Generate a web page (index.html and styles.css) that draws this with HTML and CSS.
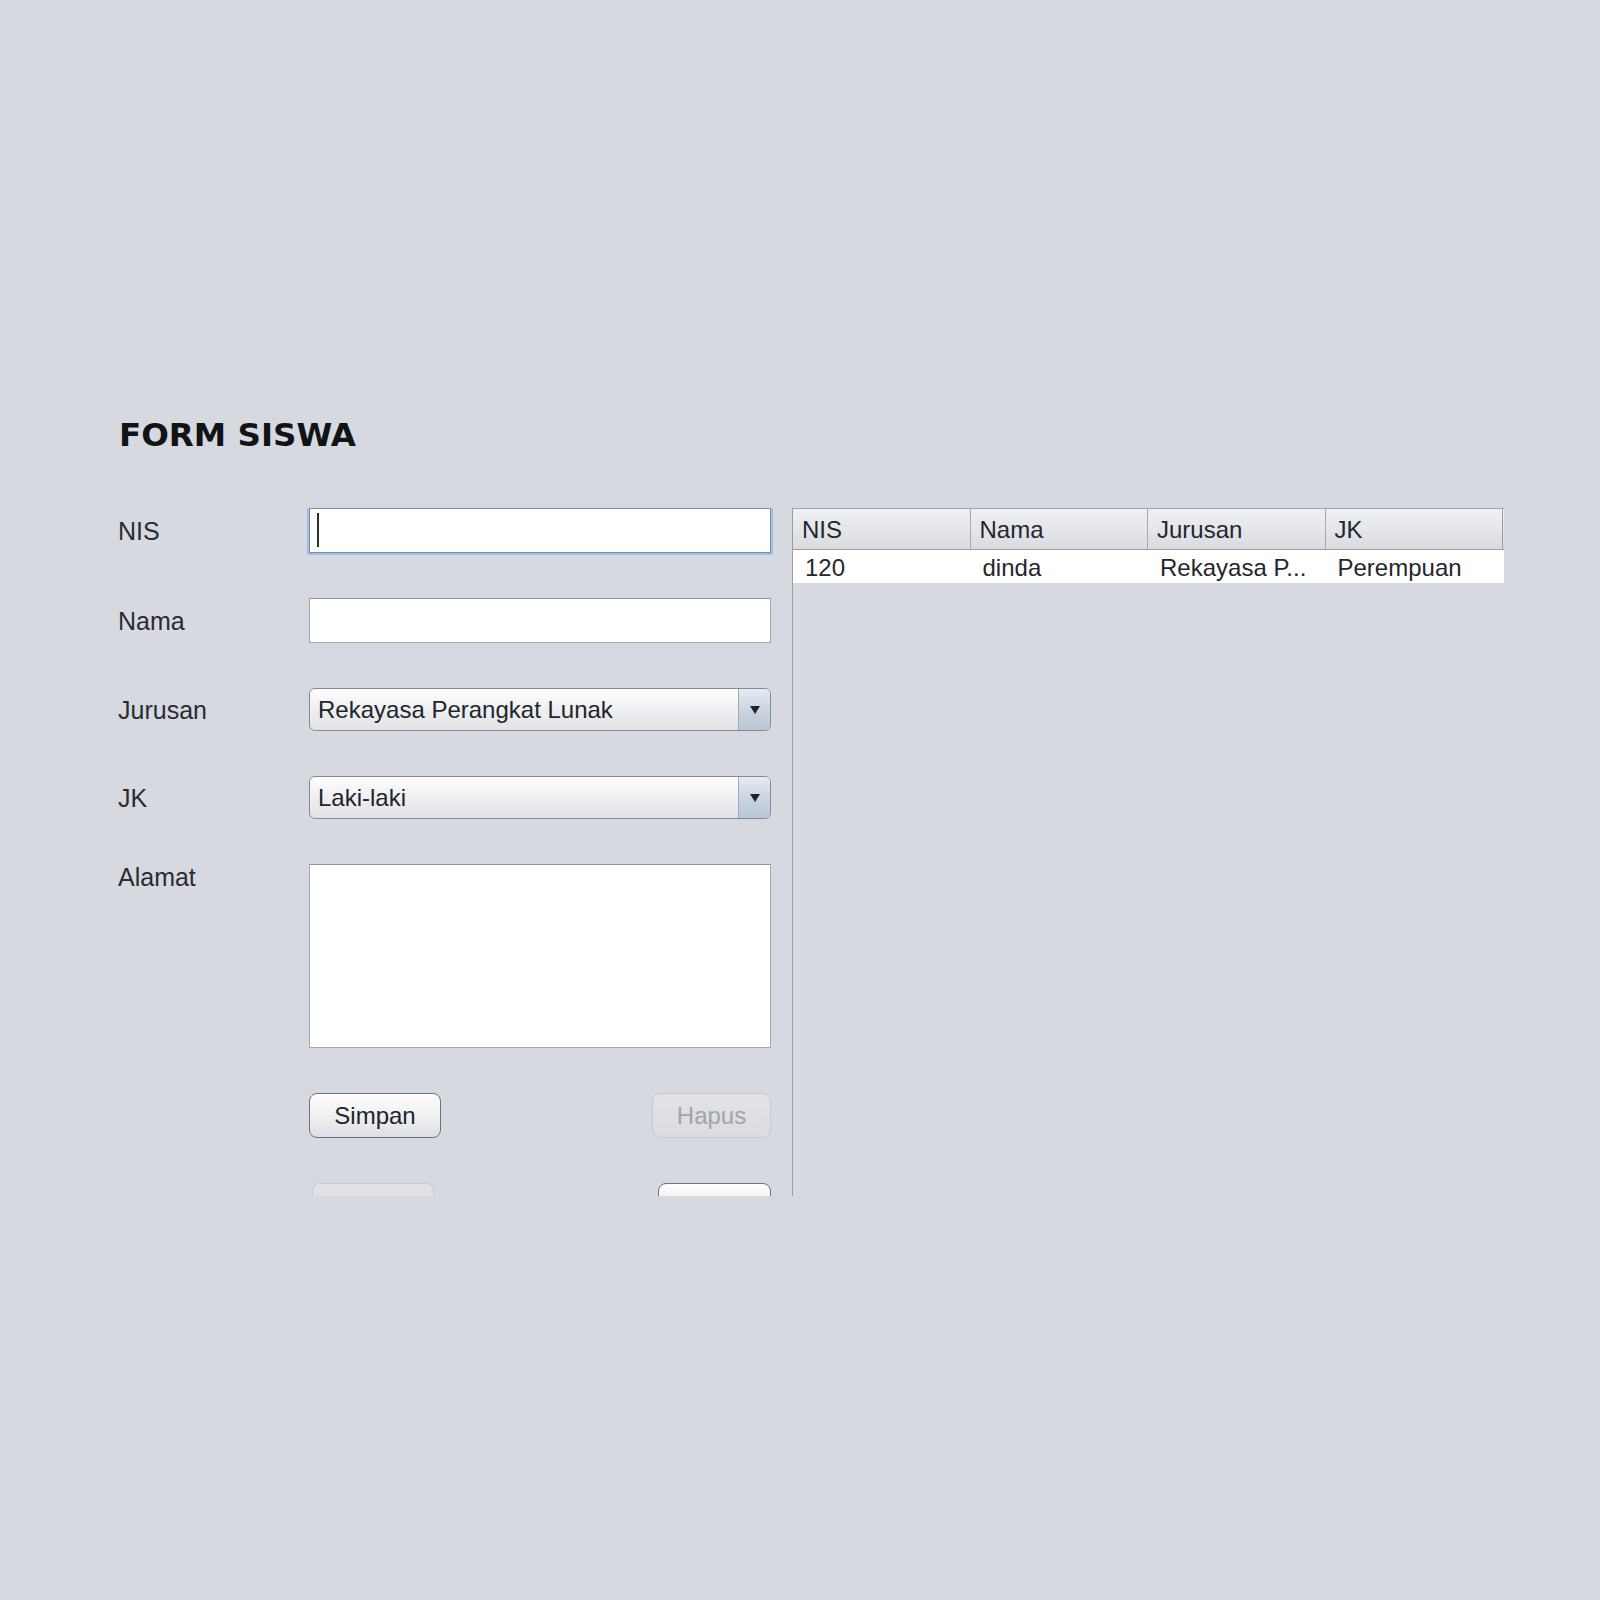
FILE: index.html
```html
<!DOCTYPE html>
<html lang="id">
<head>
  <meta charset="UTF-8">
  <title>Form Siswa</title>
  <link rel="stylesheet" href="styles.css">
</head>
<body>
  <div class="frame">
    <h1 class="title">FORM SISWA</h1>

    <div class="main">
      <!-- form input -->
      <div class="form">
        <div class="label">NIS</div>
        <div class="field focused"><span class="caret"></span></div>

        <div class="label">Nama</div>
        <div class="field"></div>

        <div class="label">Jurusan</div>
        <div class="combo">
          <span class="combo-text">Rekayasa Perangkat Lunak</span>
          <span class="combo-arrow">
            <svg width="12" height="10" viewBox="0 0 12 10"><polygon points="1,1 11,1 6,9" fill="#1e2126"/></svg>
          </span>
        </div>

        <div class="label">JK</div>
        <div class="combo">
          <span class="combo-text">Laki-laki</span>
          <span class="combo-arrow">
            <svg width="12" height="10" viewBox="0 0 12 10"><polygon points="1,1 11,1 6,9" fill="#1e2126"/></svg>
          </span>
        </div>

        <div class="label label-top">Alamat</div>
        <div class="field area"></div>

        <div></div>
        <div class="btn-row">
          <div class="btn">Simpan</div>
          <div class="btn btn-disabled btn-hapus">Hapus</div>
        </div>

        <!-- tombol baris bawah, terpotong oleh tepi panel -->
        <div></div>
        <div class="btn-row">
          <div class="btn btn-disabled btn-small"></div>
          <div class="btn btn-small2"></div>
        </div>
      </div>

      <!-- tabel data -->
      <div class="table-pane">
        <div class="thead">
          <div class="th">NIS</div>
          <div class="th">Nama</div>
          <div class="th">Jurusan</div>
          <div class="th">JK</div>
        </div>
        <div class="tr">
          <div class="td">120</div>
          <div class="td">dinda</div>
          <div class="td">Rekayasa P...</div>
          <div class="td">Perempuan</div>
        </div>
      </div>
    </div>
  </div>
</body>
</html>
```

FILE: styles.css
```css
/* global */
* {
  margin: 0;
  padding: 0;
  box-sizing: border-box;
}

body {
  background-color: #d6d9e0;
  font-family: "Liberation Sans", Arial, sans-serif;
  color: #25272c;
}

.frame {
  padding: 415px 0 0 118px;
}

.title {
  font-family: "DejaVu Sans", Verdana, sans-serif;
  font-weight: bold;
  font-size: 32.5px;
  line-height: 40px;
  color: #111316;
  margin-left: 1px;
}

/* main area, cut off at the bottom */
.main {
  display: flex;
  gap: 21px;
  margin-top: 53px;
  height: 688px;
  overflow: hidden;
}

.form {
  display: grid;
  grid-template-columns: 191px 462px;
  grid-auto-rows: min-content;
  row-gap: 45px;
  align-items: center;
}

.label {
  font-size: 25px;
  line-height: 30px;
  color: #2a2c31;
}

.label-top {
  align-self: start;
  margin-top: -2px;
}

.field {
  height: 45px;
  background-color: #fff;
  border: 1px solid #a5a8ae;
  border-top-color: #8f9299;
  position: relative;
}

.field.focused {
  border-color: #6f8fb4;
  box-shadow: 0 0 0 2px #a8bfd9;
}

.caret {
  position: absolute;
  left: 7px;
  top: 4px;
  width: 2px;
  height: 34px;
  background-color: #2b2d31;
}

.field.area {
  height: 184px;
}

/* combo box */
.combo {
  height: 43px;
  display: flex;
  align-items: center;
  border: 1px solid #878a92;
  border-radius: 6px;
  background: linear-gradient(#fefefe, #eceef1 55%, #e1e3e8);
  overflow: hidden;
}

.combo-text {
  flex: 1;
  font-size: 24px;
  padding-left: 8px;
  color: #23252a;
}

.combo-arrow {
  width: 32px;
  height: 100%;
  display: flex;
  align-items: center;
  justify-content: center;
  border-left: 1px solid #a3a9b3;
  background: linear-gradient(#e6ebf2, #c7d1de 60%, #bcc7d6);
}

/* tombol */
.btn-row {
  display: flex;
  justify-content: space-between;
}

.btn {
  width: 132px;
  height: 45px;
  display: flex;
  align-items: center;
  justify-content: center;
  font-size: 24px;
  color: #22242a;
  border: 1px solid #6f7279;
  border-radius: 8px;
  background: linear-gradient(#fdfdfd, #eceef1 60%, #dcdee3);
}

.btn-disabled {
  color: #a1a4aa;
  border-color: #c6c9cf;
  background: linear-gradient(#e1e3e8, #dadce1);
}

.btn-hapus {
  width: 119px;
}

.btn-small {
  width: 122px;
  margin-left: 3px;
}

.btn-small2 {
  width: 113px;
}

/* tabel */
.table-pane {
  width: 712px;
  border-left: 1px solid #9a9da5;
  align-self: stretch;
}

.thead {
  display: flex;
  height: 42px;
  border-top: 1px solid #a2a5ac;
  border-bottom: 1px solid #9a9da5;
  background: linear-gradient(#eff0f3, #e4e6ea 50%, #d9dbe0);
}

.th {
  width: 177.5px;
  font-size: 24px;
  padding: 7px 0 0 9px;
  color: #25272c;
  border-right: 1px solid #a6a9b0;
}

.th:last-child {
  border-right-color: #9a9da5;
}

.tr {
  display: flex;
  height: 33px;
  background-color: #fff;
}

.td {
  width: 177.5px;
  font-size: 24px;
  line-height: 30px;
  padding: 3px 0 0 12px;
  color: #25272c;
}
```
